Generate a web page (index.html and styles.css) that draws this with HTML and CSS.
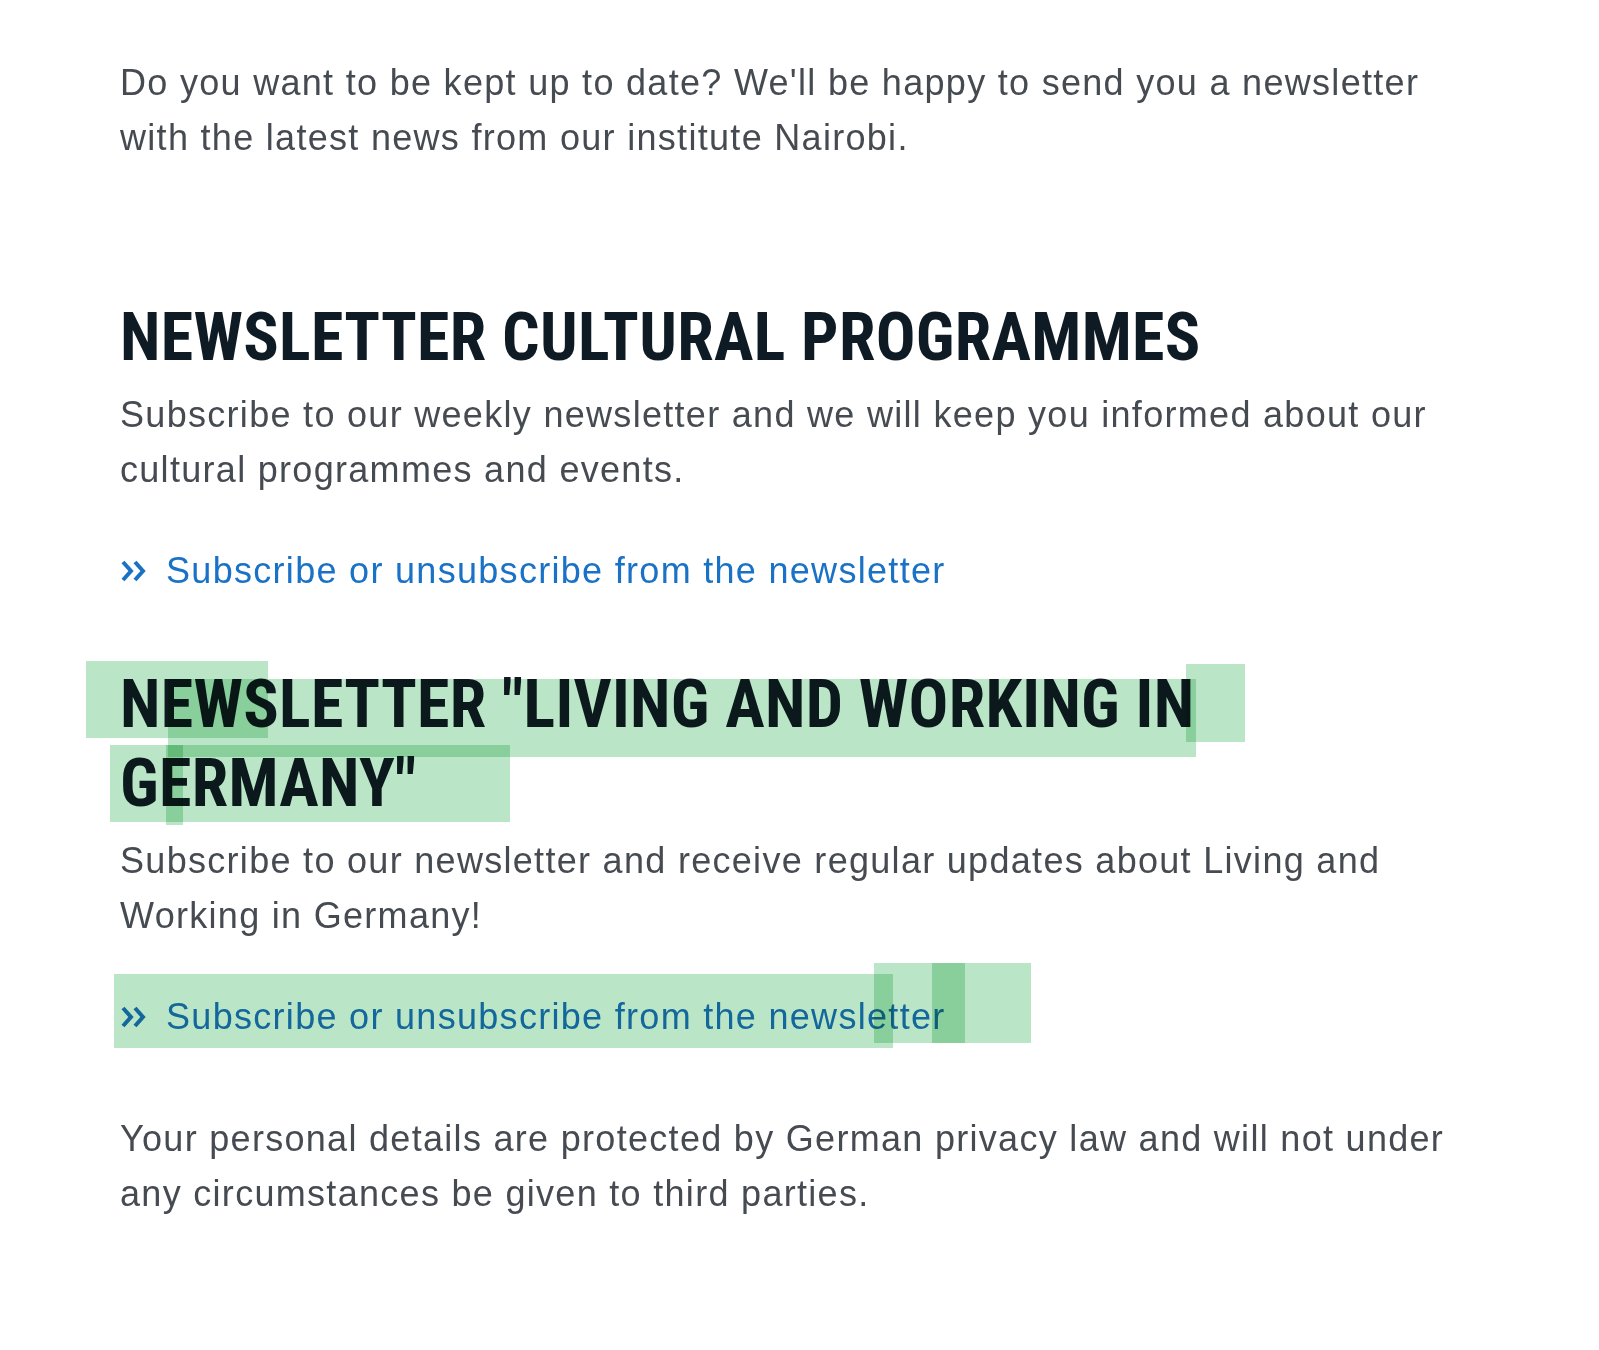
FILE: index.html
```html
<!DOCTYPE html>
<html lang="en">
<head>
<meta charset="utf-8">
<title>Newsletter</title>
<link rel="stylesheet" href="styles.css">
</head>
<body>
<main class="page">
  <p class="intro">Do you want to be kept up to date? We'll be happy to send you a newsletter with the latest news from our institute Nairobi.</p>

  <section class="block block-first">
    <h2 class="title">NEWSLETTER CULTURAL PROGRAMMES</h2>
    <p class="text">Subscribe to our weekly newsletter and we will keep you informed about our cultural programmes and events.</p>
    <a class="more" href="#"><svg class="chev" viewBox="0 0 28 28" width="28" height="28" aria-hidden="true"><path d="M3 5 L11 14 L3 23 M15 5 L23 14 L15 23" fill="none" stroke="currentColor" stroke-width="4" stroke-linejoin="miter" stroke-linecap="butt"/></svg><span>Subscribe or unsubscribe from the newsletter</span></a>
  </section>

  <section class="block">
    <h2 class="title">NEWSLETTER "LIVING AND WORKING IN GERMANY"</h2>
    <p class="text">Subscribe to our newsletter and receive regular updates about Living and Working in Germany!</p>
    <a class="more" href="#"><svg class="chev" viewBox="0 0 28 28" width="28" height="28" aria-hidden="true"><path d="M3 5 L11 14 L3 23 M15 5 L23 14 L15 23" fill="none" stroke="currentColor" stroke-width="4" stroke-linejoin="miter" stroke-linecap="butt"/></svg><span>Subscribe or unsubscribe from the newsletter</span></a>
  </section>

  <p class="text privacy">Your personal details are protected by German privacy law and will not under any circumstances be given to third parties.</p>

  <div class="mark mark-a"></div>
  <div class="mark mark-b"></div>
  <div class="mark mark-c"></div>
  <div class="mark mark-d"></div>
  <div class="mark mark-e"></div>
  <div class="mark mark-f"></div>
  <div class="mark mark-g"></div>
  <div class="mark mark-h"></div>
</main>
</body>
</html>
```

FILE: styles.css
```css
html, body {
  margin: 0;
  padding: 0;
  background: #ffffff;
}

.page {
  position: relative;
  width: 1340px;
  padding: 55px 0 120px 120px;
  font-family: "Liberation Sans", Arial, sans-serif;
  color: #464b52;
}

.intro,
.text {
  margin: 0;
  font-size: 36px;
  line-height: 55px;
  letter-spacing: 1.3px;
}

.block-first {
  margin-top: 133px;
}

.block {
  display: flex;
  flex-direction: column;
  align-items: flex-start;
}

.block + .block {
  margin-top: 67px;
}

.title {
  margin: 0 0 10px 0;
  font-family: "Roboto", "Open Sans", sans-serif;
  font-stretch: 75%;
  font-weight: bold;
  font-size: 66px;
  line-height: 79px;
  letter-spacing: 0.3px;
  color: #0f1b24;
}

.more {
  margin-top: 46px;
  display: flex;
  align-items: center;
  gap: 18px;
  font-size: 36px;
  line-height: 55px;
  letter-spacing: 1.3px;
  color: #1a72c6;
  text-decoration: none;
}

.chev {
  flex: none;
}

.privacy {
  margin-top: 67px;
}

.mark {
  position: absolute;
  background: rgb(186, 230, 199);
  mix-blend-mode: multiply;
  pointer-events: none;
}

.mark-a { left: 86px;  top: 661px; width: 182px;  height: 77px; }
.mark-b { left: 168px; top: 679px; width: 1028px; height: 78px; }
.mark-c { left: 1186px; top: 664px; width: 59px; height: 78px; }
.mark-d { left: 110px; top: 745px; width: 400px; height: 77px; }
.mark-e { left: 166px; top: 745px; width: 17px; height: 80px; }
.mark-f { left: 114px; top: 974px; width: 779px; height: 74px; }
.mark-g { left: 874px; top: 963px; width: 157px; height: 80px; }
.mark-h { left: 932px; top: 963px; width: 33px; height: 80px; }
```
